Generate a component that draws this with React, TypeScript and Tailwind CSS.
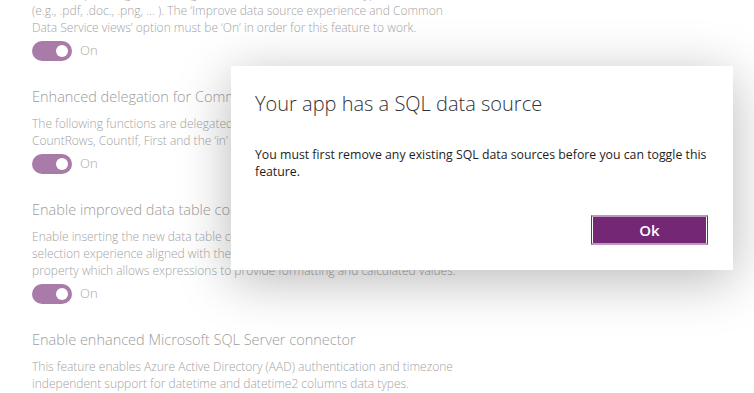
import React from "react";

interface Section {
  title?: string;
  lines: string[];
  toggle: boolean;
}

const sections: Section[] = [
  {
    lines: [
      "Enables uploading and viewing attachments of additional file types",
      "(e.g., .pdf, .doc., .png, ... ). The \u2018Improve data source experience and Common",
      "Data Service views\u2019 option must be \u2018On\u2019 in order for this feature to work.",
    ],
    toggle: true,
  },
  {
    title: "Enhanced delegation for Common Data Service",
    lines: [
      "The following functions are delegated for Common Data Service data sources:",
      "CountRows, CountIf, First and the \u2018in\u2019 operator.",
    ],
    toggle: true,
  },
  {
    title: "Enable improved data table control selection and Value property",
    lines: [
      "Enable inserting the new data table control which includes a new",
      "selection experience aligned with the gallery control and a new Value",
      "property which allows expressions to provide formatting and calculated values.",
    ],
    toggle: true,
  },
  {
    title: "Enable enhanced Microsoft SQL Server connector",
    lines: [
      "This feature enables Azure Active Directory (AAD) authentication and timezone",
      "independent support for datetime and datetime2 columns data types.",
    ],
    toggle: false,
  },
];

const Toggle = () => (
  <div className="flex items-center h-5 mt-[5px]">
    <div className="w-10 h-5 rounded-full bg-[#a97ba9] flex items-center justify-end pr-[4px]">
      <div className="w-3 h-3 rounded-full bg-white" />
    </div>
    <span className="ml-[8px] text-[13px] font-light text-[#a8a8a8]">On</span>
  </div>
);

const App: React.FC = () => {
  return (
    <div
      className="relative w-[754px] h-[393px] overflow-hidden bg-white"
      style={{ fontFamily: '"Open Sans", "Noto Sans", sans-serif' }}
    >
      {/* settings list behind the dialog */}
      <div className="pl-8 -mt-[15px] flex flex-col">
        {sections.map((s, i) => (
          <div key={i} className={s.title ? "mt-[25px]" : ""}>
            {s.title && (
              <div className="text-[14.5px] leading-[22px] font-light text-[#9c9c9c] whitespace-nowrap mb-[7px]">
                {s.title}
              </div>
            )}
            <div className="text-[12px] leading-[17px] font-light text-[#a3a3a3] whitespace-nowrap">
              {s.lines.map((l, j) => (
                <div key={j}>{l}</div>
              ))}
            </div>
            {s.toggle && <Toggle />}
          </div>
        ))}
      </div>

      {/* modal dialog */}
      <div className="absolute left-[231px] top-[66px] w-[502px] h-[204px] bg-white shadow-[0_10px_50px_rgba(0,0,0,0.28)] pl-6 pr-[25px] pt-6 flex flex-col">
        <h2 className="text-[20px] leading-[28px] font-light text-[#333]">
          Your app has a SQL data source
        </h2>
        <p className="mt-[28px] text-[12.3px] leading-[17px] text-[#1e1e1e]">
          <span className="whitespace-nowrap">
            You must first remove any existing SQL data sources before you can toggle this
          </span>
          <br />
          feature.
        </p>
        <div className="mt-auto mb-[25px] flex justify-end">
          <button className="w-[117px] h-[30px] border-x border-x-[#742774] border-y-2 border-y-[#bd97bd] bg-[#742774] shadow-[inset_1px_0_0_#fff,inset_-1px_0_0_#fff] text-white text-[15px] font-semibold">
            Ok
          </button>
        </div>
      </div>
    </div>
  );
};

export default App;
